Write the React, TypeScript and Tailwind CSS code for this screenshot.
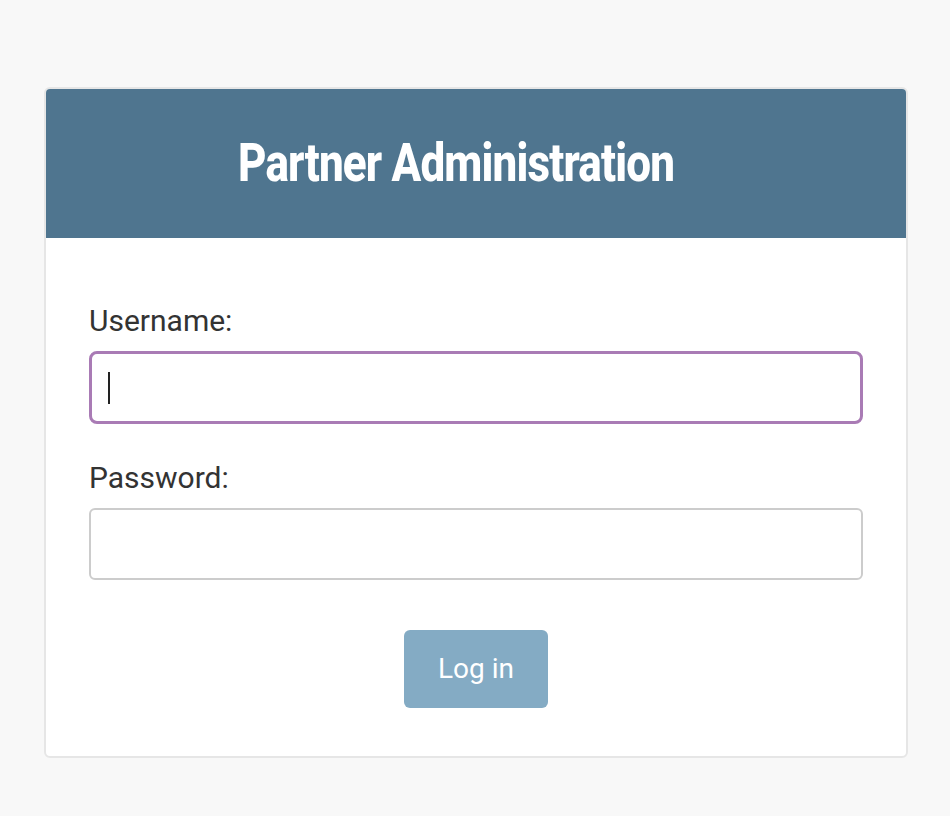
export default function App() {
	return (
		<div className="min-h-[816px] bg-[#f8f8f8] pt-[87px] px-[44px] font-['Roboto','Liberation_Sans',sans-serif]">
			<div className="w-[864px] h-[671px] rounded-[6px] border-2 border-[#e6e6e6] bg-white overflow-hidden">
				<div className="h-[149px] bg-[#4f758f] flex items-center pl-[192px]">
					<h1 className="text-white text-[53px] font-extrabold tracking-[-1px] leading-none origin-left scale-x-[0.83] whitespace-nowrap font-['Roboto','Liberation_Sans',sans-serif]">
						Partner Administration
					</h1>
				</div>
				<form className="px-[43px] pt-[63px] flex flex-col">
					<label className="text-[30px] text-[#333] leading-[40px]">Username:</label>
					<div className="relative mt-[10px]">
						<input
							type="text"
							className="w-full h-[73px] rounded-[8px] border-[3px] border-[#a97bb5] outline-none px-4 text-[27px]"
						/>
						<span className="absolute left-[19px] top-[21px] w-[2px] h-[32px] bg-[#222]" />
					</div>
					<label className="mt-[34px] text-[30px] text-[#333] leading-[40px]">Password:</label>
					<input
						type="password"
						className="mt-[10px] w-full h-[72px] rounded-[6px] border-2 border-[#cccccc] outline-none px-4 text-[27px]"
					/>
					<div className="flex justify-center mt-[50px]">
						<button
							type="button"
							className="w-[144px] h-[78px] rounded-[6px] bg-[#84abc4] text-white text-[28px]"
						>
							Log in
						</button>
					</div>
				</form>
			</div>
		</div>
	);
}
